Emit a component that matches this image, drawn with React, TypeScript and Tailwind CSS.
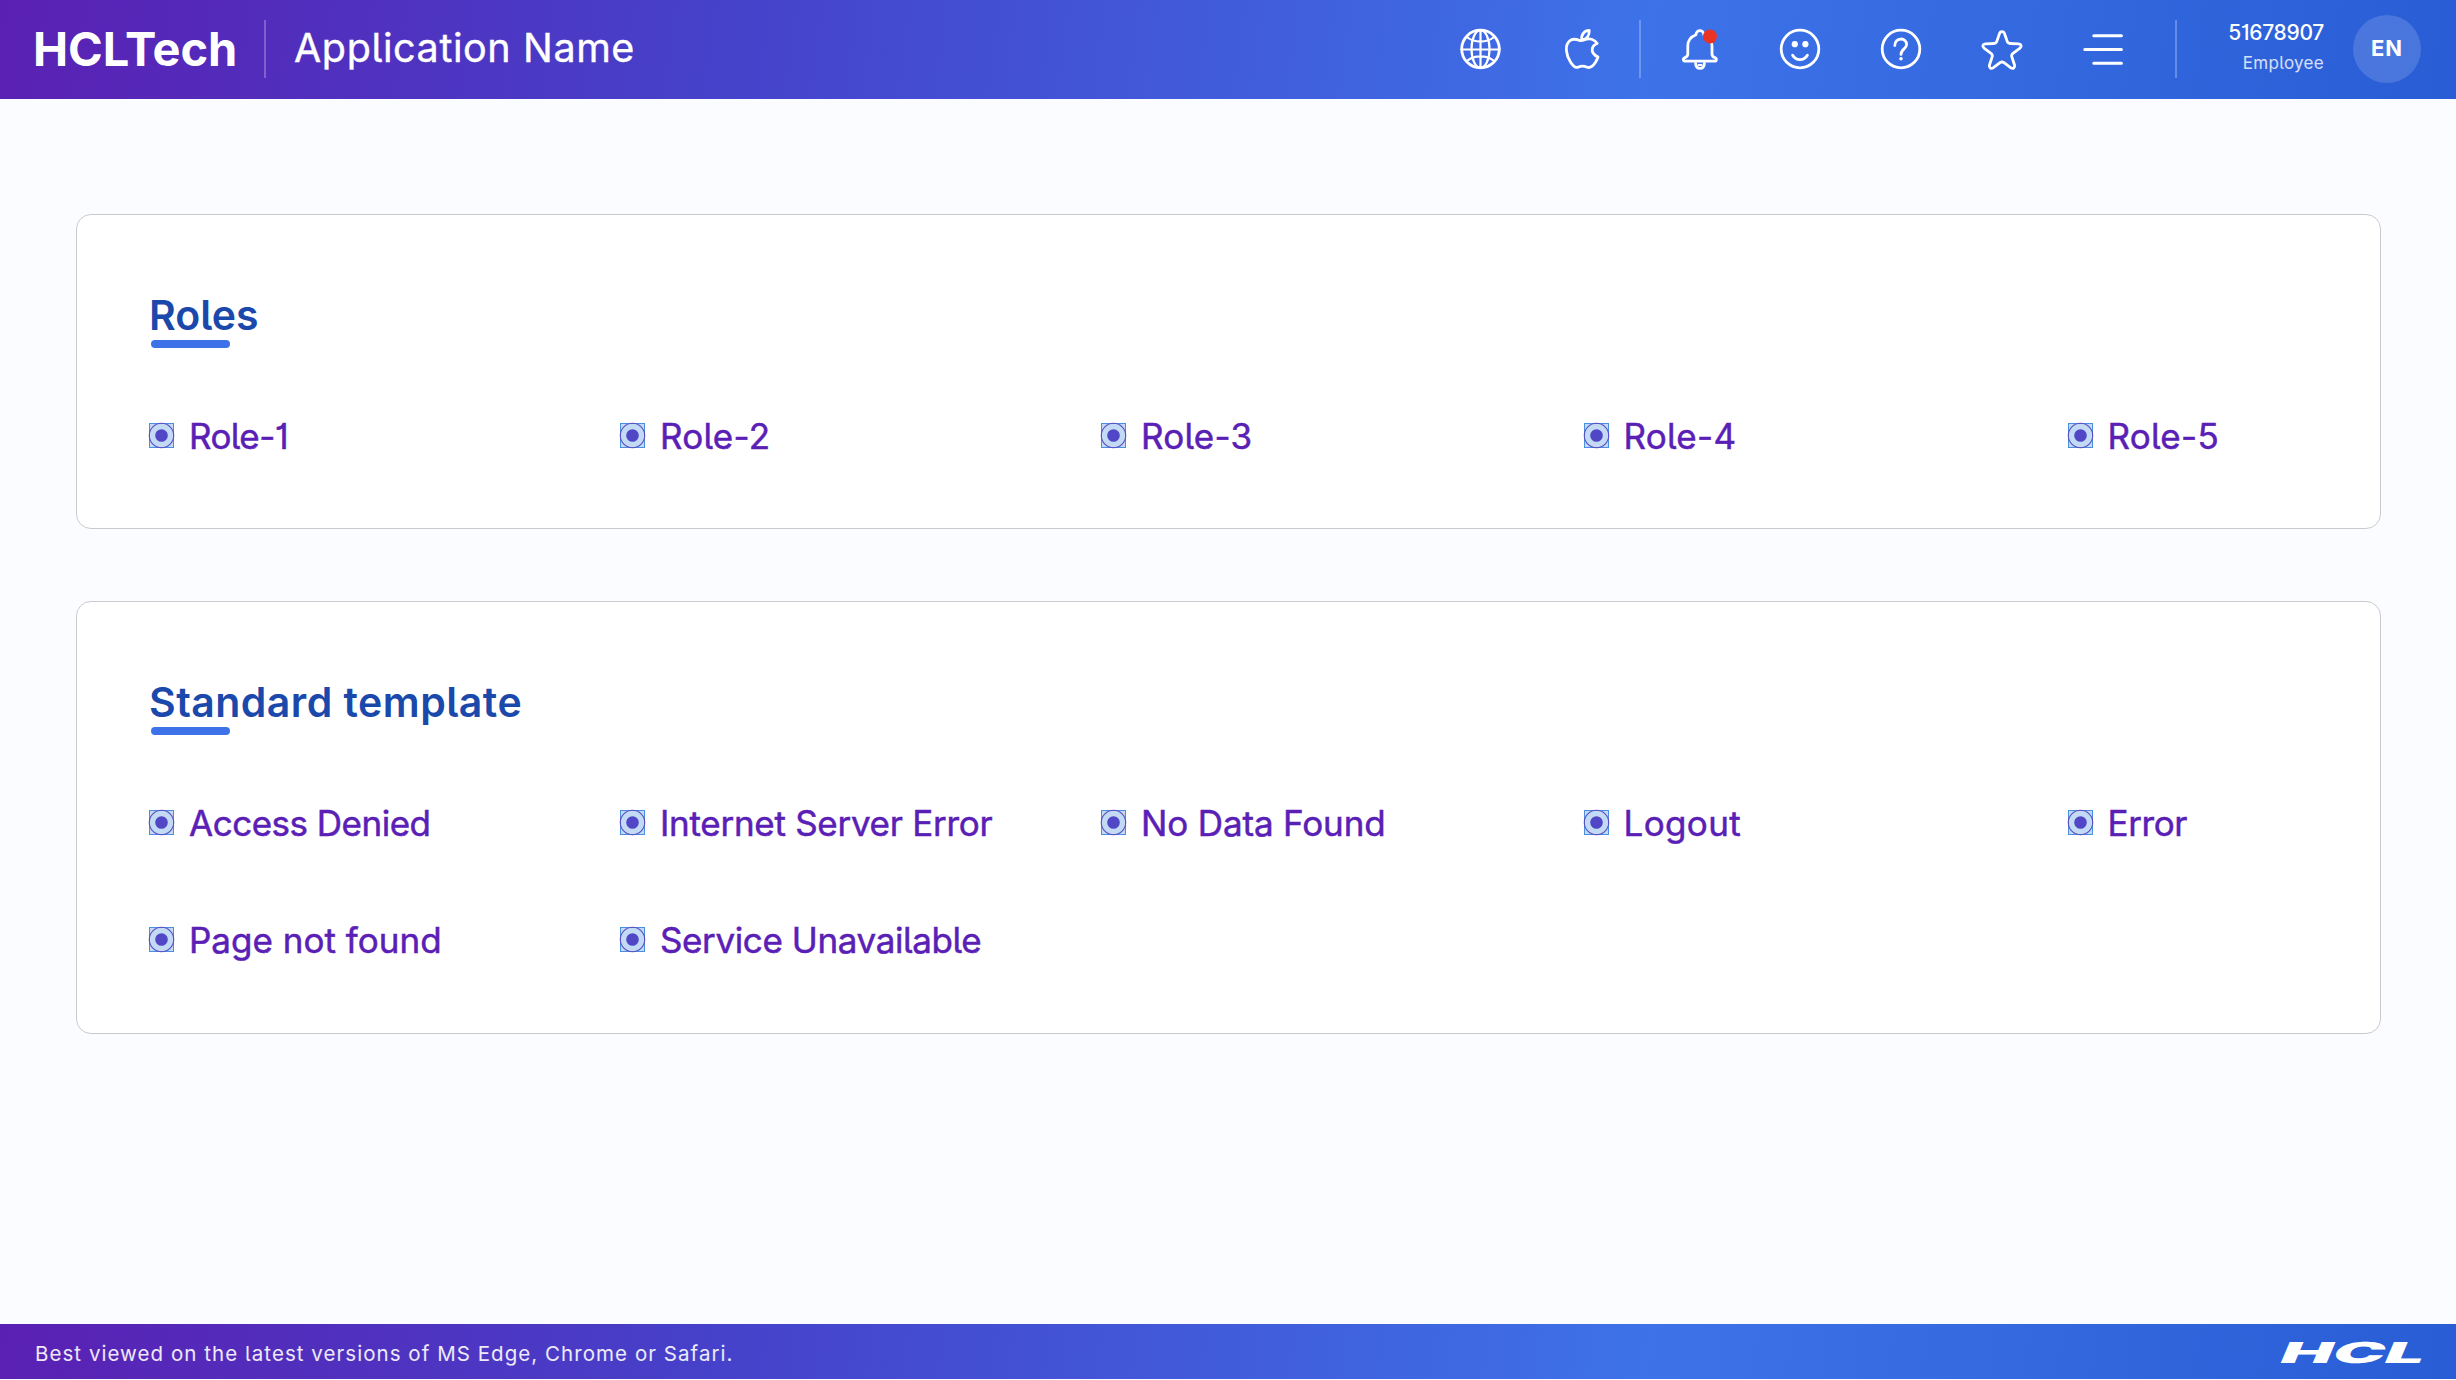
import type { ReactNode } from "react";

const barGradient =
  "bg-[linear-gradient(98deg,#5a20b3_0%,#4641ca_29%,#3d72e9_67%,#295dd5_100%)]";

function Icon({ children, className = "" }: { children: ReactNode; className?: string }) {
  return (
    <svg
      viewBox="0 0 42 42"
      fill="none"
      stroke="white"
      strokeWidth={2.8}
      strokeLinecap="round"
      strokeLinejoin="round"
      className={`size-[42px] shrink-0 overflow-visible ${className}`}
    >
      {children}
    </svg>
  );
}

function Divider({ className = "" }: { className?: string }) {
  return <span className={`h-[58px] w-[2px] shrink-0 bg-white/25 ${className}`} />;
}

function Header() {
  return (
    <header className={`h-[99px] w-full shrink-0 ${barGradient}`}>
      <div className="flex h-[97px] items-center text-white">
        <div className="ml-[33px] w-[231px] text-[47px] leading-none font-bold tracking-[-0.1px] whitespace-nowrap">
          HCLTech
        </div>
        <Divider />
        <div className="ml-[28px] text-[39.5px] leading-none tracking-[0.6px] whitespace-nowrap [-webkit-text-stroke:0.4px_white]">
          Application Name
        </div>
        <div className="ml-auto flex items-center">
          <Icon>
            <circle cx="21.5" cy="21" r="18.8" />
            <g strokeWidth={2.2}>
              <ellipse cx="21.5" cy="21" rx="9" ry="18.8" />
              <path d="M21.5 2v38M2.5 21.5h38M8.5 9.5c7 5.4 19 5.4 26 0M8.5 32.5c7-5.4 19-5.4 26 0" />
            </g>
          </Icon>
          <Icon className="ml-[60px]">
            <path d="M36.2 15.5C33.5 11.5 29 10.2 25.5 11.2C22.5 12 21 13.3 18.5 12.5C15 11 11.5 10.3 8.5 13C3.5 17.5 5 27 9.5 34C12.5 39 14.5 40.2 17 39.2C20 37.8 23 37.8 26 39.2C29.5 40.5 32 38 34.5 34.2C35.8 32 36.6 30.3 37 29C32.8 27 31 24 31.2 21.5C31.4 18.5 33.5 16.5 36.2 15.5Z" />
            <path d="M20.8 11.8C20 6.5 23.5 2.5 28.2 2.4C28.5 7 26 11.3 20.8 11.8Z" />
          </Icon>
          <Divider className="ml-[36px]" />
          <Icon className="ml-[38px]">
            <path d="M17 6.8C17 1.2 24.8 1.2 24.8 6.8C30.5 9 32.9 12.5 33 18V26C33 28 34 29 35.8 29.6C38.2 30.6 37.6 33.2 35.5 33.2H6.5C4 33.2 3.6 30.6 6 29.6C8 28.8 8.8 28 8.8 26V18C8.8 12.5 11.3 9 17 6.8Z" />
            <path d="M16.6 35.4C16.8 38.6 18.4 40.4 21 40.4C23.6 40.4 25.2 38.6 25.4 35.4" />
            <path d="M19.5 37H22.5" strokeWidth={2} />
            <circle cx="31" cy="8.5" r="7" fill="#ea3323" stroke="none" />
          </Icon>
          <Icon className="ml-[58px]">
            <circle cx="21" cy="21" r="18.8" />
            <circle cx="15.8" cy="16.2" r="3.1" fill="white" stroke="none" />
            <circle cx="26.4" cy="16.2" r="3.1" fill="white" stroke="none" />
            <path d="M13.6 27.2C17 33 25 33 28.4 27.2" />
          </Icon>
          <Icon className="ml-[59px]">
            <circle cx="21" cy="21" r="18.8" />
            <path d="M14.8 17.6C14.8 9 26.6 9 26.6 16.6C26.6 21 21 20.8 21 26.4" />
            <circle cx="21" cy="30.8" r="1.8" fill="white" stroke="none" />
          </Icon>
          <Icon className="ml-[59px]">
            <path d="M18.6 5.2C19.4 3.2 22.6 3.2 23.4 5.2L26.2 13.4Q26.9 15.4 29 15.5L37.6 15.8C40.4 16 41 18.6 39 20.1L32 25.3Q30.2 26.6 30.8 28.8L33.6 37.2C34.2 39.8 31.9 41.2 29.9 39.9L23 34.7Q21 33.3 19 34.7L12.1 39.9C10.1 41.2 7.8 39.8 8.4 37.2L11.2 28.8Q11.8 26.6 10 25.3L3 20.1C1 18.6 1.6 16 4.4 15.8L13 15.5Q15.1 15.4 15.8 13.4Z" />
          </Icon>
          <Icon className="ml-[59px]">
            <path strokeWidth={3} d="M11.8 7.8H39.4M2.8 21.5H39.4M11.8 35.2H39.4" />
          </Icon>
          <Divider className="ml-[51px]" />
          <div className="ml-[47px] w-[100px] pb-[2px] text-right whitespace-nowrap">
            <div className="text-[21px] leading-[30px] font-medium tracking-[-0.3px]">51678907</div>
            <div className="text-[17px] leading-[30px] tracking-[0.3px] text-white/80">Employee</div>
          </div>
          <div className="mr-[35px] ml-[29px] flex size-[68px] items-center justify-center rounded-full bg-white/15 text-[22px] font-bold tracking-[1px]">
            EN
          </div>
        </div>
      </div>
    </header>
  );
}

function Bullet() {
  return (
    <svg viewBox="0 0 25 25" className="size-[25px] shrink-0 overflow-visible">
      <rect x="0.5" y="0.5" width="24" height="24" fill="#c3daf4" stroke="#4a90e2" />
      <circle cx="12.5" cy="12.5" r="12.2" fill="none" stroke="#5b4fc4" strokeWidth="1.1" />
      <circle cx="12.5" cy="12.5" r="6.3" fill="#5046c6" />
    </svg>
  );
}

type Item = { label: string; tracking: string };

const roles: Item[] = [
  { label: "Role-1", tracking: "tracking-[-0.6px]" },
  { label: "Role-2", tracking: "tracking-[0.25px]" },
  { label: "Role-3", tracking: "tracking-[0.25px]" },
  { label: "Role-4", tracking: "tracking-[0.25px]" },
  { label: "Role-5", tracking: "tracking-[0.25px]" },
];

const templates: Item[] = [
  { label: "Access Denied", tracking: "tracking-[-0.5px]" },
  { label: "Internet Server Error", tracking: "tracking-[-0.28px]" },
  { label: "No Data Found", tracking: "tracking-[-0.14px]" },
  { label: "Logout", tracking: "tracking-[0.36px]" },
  { label: "Error", tracking: "tracking-[-0.4px]" },
  { label: "Page not found", tracking: "tracking-[0.02px]" },
  { label: "Service Unavailable", tracking: "tracking-[-0.39px]" },
];

function Section({
  title,
  items,
  className,
  titleClassName,
}: {
  title: string;
  items: Item[];
  className: string;
  titleClassName: string;
}) {
  return (
    <section
      className={`rounded-[15px] border-[1.5px] border-[#cacacc] bg-white pt-[76px] pl-[72px] ${className}`}
    >
      <h2
        className={`h-[49px] text-[41px] leading-[49px] font-semibold whitespace-nowrap text-[#1b49ab] ${titleClassName}`}
      >
        {title}
      </h2>
      <div className="ml-[2px] h-[7.5px] w-[79px] rounded-full bg-[#3d72e9]" />
      <ul className="mt-[62.5px] grid grid-cols-[471px_481px_482.5px_484px_1fr] gap-y-[67px]">
        {items.map(({ label, tracking }) => (
          <li key={label} className="flex h-[50px] items-center gap-[15px]">
            <Bullet />
            <span
              className={`pt-[2px] text-[35px] leading-none whitespace-nowrap text-[#5a20b6] [-webkit-text-stroke:0.5px_#5a20b6] ${tracking}`}
            >
              {label}
            </span>
          </li>
        ))}
      </ul>
    </section>
  );
}

export default function App() {
  return (
    <div className="flex h-[1380px] w-[2456px] flex-col overflow-hidden bg-[#fbfcff] font-[Inter,'Liberation_Sans',sans-serif] [font-feature-settings:'cv01','cv05']">
      <Header />
      <main className="flex flex-1 flex-col gap-[72px] pt-[115px] pr-[75px] pl-[76px]">
        <Section title="Roles" items={roles} className="h-[315px]" titleClassName="tracking-[0px]" />
        <Section
          title="Standard template"
          items={templates}
          className="h-[433px]"
          titleClassName="tracking-[0.46px]"
        />
      </main>
      <footer
        className={`mb-px flex h-[55px] shrink-0 items-center justify-between px-[35px] text-white ${barGradient}`}
      >
        <span className="pt-[5px] text-[20.5px] tracking-[1.05px] whitespace-nowrap text-white/90">
          Best viewed on the latest versions of MS Edge, Chrome or Safari.
        </span>
        <span className="flex w-[139px] justify-start pt-[2px]">
          <span className="origin-left scale-x-[2.4] -skew-x-[10deg] text-[29px] leading-none font-black">
            HCL
          </span>
        </span>
      </footer>
    </div>
  );
}
